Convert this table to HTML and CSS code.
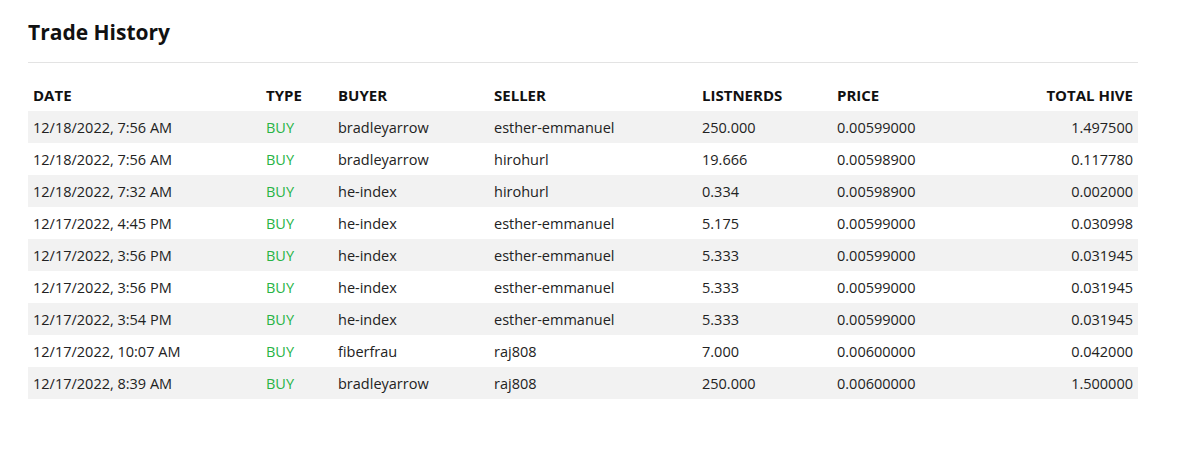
FILE: index.html
```html
<!DOCTYPE html>
<html>
<head>
<meta charset="utf-8">
<link rel="stylesheet" href="styles.css">
</head>
<body>
<div class="page">
  <h2 class="title">Trade History</h2>
  <hr class="divider">
  <table class="trades">
    <colgroup>
      <col class="c-date"><col class="c-type"><col class="c-buyer"><col class="c-seller"><col class="c-qty"><col class="c-price"><col class="c-total">
    </colgroup>
    <thead>
      <tr><th>DATE</th><th>TYPE</th><th>BUYER</th><th>SELLER</th><th>LISTNERDS</th><th>PRICE</th><th class="right">TOTAL HIVE</th></tr>
    </thead>
    <tbody>
      <tr><td>12/18/2022, 7:56 AM</td><td class="buy">BUY</td><td>bradleyarrow</td><td>esther-emmanuel</td><td>250.000</td><td>0.00599000</td><td class="right">1.497500</td></tr>
      <tr><td>12/18/2022, 7:56 AM</td><td class="buy">BUY</td><td>bradleyarrow</td><td>hirohurl</td><td>19.666</td><td>0.00598900</td><td class="right">0.117780</td></tr>
      <tr><td>12/18/2022, 7:32 AM</td><td class="buy">BUY</td><td>he-index</td><td>hirohurl</td><td>0.334</td><td>0.00598900</td><td class="right">0.002000</td></tr>
      <tr><td>12/17/2022, 4:45 PM</td><td class="buy">BUY</td><td>he-index</td><td>esther-emmanuel</td><td>5.175</td><td>0.00599000</td><td class="right">0.030998</td></tr>
      <tr><td>12/17/2022, 3:56 PM</td><td class="buy">BUY</td><td>he-index</td><td>esther-emmanuel</td><td>5.333</td><td>0.00599000</td><td class="right">0.031945</td></tr>
      <tr><td>12/17/2022, 3:56 PM</td><td class="buy">BUY</td><td>he-index</td><td>esther-emmanuel</td><td>5.333</td><td>0.00599000</td><td class="right">0.031945</td></tr>
      <tr><td>12/17/2022, 3:54 PM</td><td class="buy">BUY</td><td>he-index</td><td>esther-emmanuel</td><td>5.333</td><td>0.00599000</td><td class="right">0.031945</td></tr>
      <tr><td>12/17/2022, 10:07 AM</td><td class="buy">BUY</td><td>fiberfrau</td><td>raj808</td><td>7.000</td><td>0.00600000</td><td class="right">0.042000</td></tr>
      <tr><td>12/17/2022, 8:39 AM</td><td class="buy">BUY</td><td>bradleyarrow</td><td>raj808</td><td>250.000</td><td>0.00600000</td><td class="right">1.500000</td></tr>
    </tbody>
  </table>
</div>
</body>
</html>
```
FILE: styles.css
```css
html, body {
  margin: 0;
  padding: 0;
  background: #ffffff;
}
body {
  font-family: "Open Sans", "Noto Sans", sans-serif;
  color: #222222;
}
.page {
  width: 1110px;
  padding: 18px 0 0 28px;
}
.title {
  margin: 0;
  font-size: 21px;
  font-weight: 700;
  line-height: 28px;
  color: #111111;
}
.divider {
  margin: 16px 0 0 0;
  border: 0;
  border-top: 1px solid #e3e3e3;
  height: 0;
}
.trades {
  width: 1110px;
  margin-top: 16px;
  border-collapse: collapse;
  table-layout: fixed;
  font-size: 14.5px;
}
.c-date { width: 233px; }
.c-type { width: 72px; }
.c-buyer { width: 156px; }
.c-seller { width: 208px; }
.c-qty { width: 135px; }
.c-price { width: 135px; }
.c-total { width: 171px; }
.trades th {
  text-align: left;
  font-weight: 700;
  font-size: 15px;
  height: 32px;
  padding: 0 5px;
  color: #111111;
}
.trades td {
  height: 32px;
  padding: 0 5px;
  white-space: nowrap;
}
.trades tbody tr:nth-child(odd) {
  background: #f2f2f2;
}
.trades .right {
  text-align: right;
}
.trades .buy {
  color: #28b446;
}
```
